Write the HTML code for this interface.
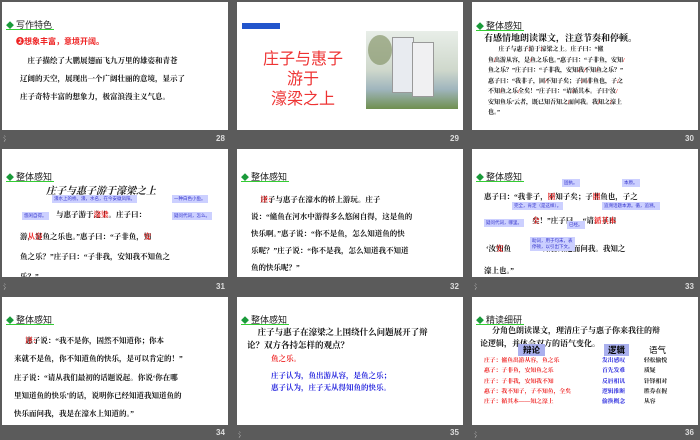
<!DOCTYPE html>
<html><head><meta charset="utf-8"><style>
*{margin:0;padding:0;box-sizing:border-box}
body{width:700px;height:437px;background:#5b5b5b;position:relative;overflow:hidden;font-family:"Liberation Serif","Noto Serif CJK SC",serif}
.s{position:absolute;width:226px;height:128px;background:#fff;overflow:hidden}
.s *{position:absolute;white-space:nowrap}
.h{left:4px;top:16px;font:9px "Liberation Sans","Noto Sans CJK SC",sans-serif;color:#222}
.h:before{content:"◆";color:#1a9a3a;font-size:8px;margin-right:2px}
.h:after{content:"";position:absolute;left:0;top:11px;width:48px;height:1px;background:#3c3}
.t{font-size:7.5px;line-height:16px;color:#111;font-weight:bold}
.r{color:#e22}.b{color:#22d}
.n{position:absolute;color:#ddd;font:bold 8px "Liberation Sans",sans-serif}
.i{position:absolute;color:#bbb;font:7px sans-serif}
.tag{background:#ccd0ff;color:#33c;font-size:4.5px;padding:1px 2px;font-family:"Noto Sans CJK SC",sans-serif}
</style></head><body>
<!-- 28 -->
<div class="s" style="left:2px;top:2px">
<div class="h">写作特色</div>
<div style="left:14px;top:34px;font:bold 8px 'Noto Sans CJK SC',sans-serif;color:#e22">❷想象丰富，意境开阔。</div>
<div class="t" style="left:18px;top:50px;line-height:18px">&nbsp;&nbsp;&nbsp;&nbsp;庄子描绘了大鹏展翅而飞九万里的雄姿和青苍<br>辽阔的天空，展现出一个广阔壮丽的意境，显示了<br>庄子奇特丰富的想象力，极富浪漫主义气息。</div>
</div>
<div class="i" style="left:3px;top:134px">氵</div><div class="n" style="left:216px;top:134px">28</div>
<!-- 29 -->
<div class="s" style="left:237px;top:2px">
<div style="left:5px;top:21px;width:38px;height:6px;background:#2255cc"></div>
<div style="left:16px;top:45px;width:100px;text-align:center;font:16px 'Noto Sans CJK SC',sans-serif;line-height:20px;color:#e33;white-space:normal">庄子与惠子<br>游于<br>濠梁之上</div>
<div style="left:129px;top:29px;width:92px;height:78px;background:linear-gradient(180deg,#e8eee8 0%,#cfd8cc 50%,#9fb5bd 75%,#6f8f4f 100%)"></div>
<div style="left:155px;top:35px;width:22px;height:56px;background:#e8ebf0;border:1px solid #999"></div>
<div style="left:175px;top:40px;width:22px;height:55px;background:#f0f0f2;border:1px solid #999"></div>
<div style="left:131px;top:33px;width:24px;height:30px;background:#7a8a5a;border-radius:50%;opacity:.6"></div>
</div>
<div class="n" style="left:450px;top:134px">29</div>
<!-- 30 -->
<div class="s" style="left:472px;top:2px">
<div class="h" style="top:17px">整体感知</div>
<div style="left:12px;top:29px;font:bold 9px 'Noto Serif CJK SC',serif;color:#111">有感情地朗读课文，注意节奏和停顿。</div>
<div class="t" style="left:16px;top:43px;font-size:6px;line-height:10.5px">&nbsp;&nbsp;&nbsp;&nbsp;&nbsp;&nbsp;&nbsp;庄子与惠子<span class="r">/</span>游于<span class="r">/</span>濠梁之上。庄子曰：“鯈<br>鱼<span class="r">/</span>出游从容，是<span class="r">/</span>鱼之乐也。”惠子曰：“子非鱼，安知<span class="r">/</span><br>鱼之乐？”庄子曰：“子非我，安知<span class="r">/</span>我<span class="r">/</span>不知<span class="r">/</span>鱼之乐？”<br>惠子曰：“我非子，固<span class="r">/</span>不知子矣；子<span class="r">/</span>固<span class="r">/</span>非鱼也，子<span class="r">/</span>之<br>不知<span class="r">/</span>鱼之乐<span class="r">/</span>全矣！”庄子曰：“请<span class="r">/</span>循其本。子曰‘汝<span class="r">/</span><br>安知鱼乐’云者，既已知吾知之<span class="r">/</span>而问我。我<span class="r">/</span>知之<span class="r">/</span>濠上<br>也。”</div>
</div>
<div class="n" style="left:685px;top:134px">30</div>
<!-- 31 -->
<div class="s" style="left:2px;top:149px">
<div class="h" style="top:21px">整体感知</div>
<div style="left:44px;top:33px;font:italic bold 10px 'Noto Serif CJK SC',serif;color:#222">庄子与惠子游于濠梁之上</div>
<div class="tag" style="left:50px;top:46px">濠水上的桥。濠，水名，在今安徽凤阳。</div>
<div class="tag" style="left:170px;top:46px">一种白色小鱼。</div>
<div class="tag" style="left:20px;top:63px">悠闲自得。</div>
<div class="tag" style="left:170px;top:63px">疑问代词，怎么。</div>
<div class="t" style="left:54px;top:58px">与惠子游于<span class="r">濠梁</span>之上。庄子曰：</div>
<div class="t" style="left:18px;top:78px;line-height:20px">游<span class="r">从容</span>，是鱼之乐也。”惠子曰：“子非鱼，<span class="r">安</span>知<br>鱼之乐？”庄子曰：“子非我，安知我不知鱼之<br>乐？”</div>
</div>
<div class="i" style="left:3px;top:282px">氵</div><div class="n" style="left:216px;top:282px">31</div>
<!-- 32 -->
<div class="s" style="left:237px;top:149px">
<div class="h" style="top:21px">整体感知</div>
<div class="t" style="left:14px;top:42px;line-height:17px">&nbsp;&nbsp;&nbsp;&nbsp;&nbsp;<span class="r">译：</span>庄子与惠子在濠水的桥上游玩。庄子<br>说：“鯈鱼在河水中游得多么悠闲自得，这是鱼的<br>快乐啊。”惠子说：“你不是鱼，怎么知道鱼的快<br>乐呢？”庄子说：“你不是我，怎么知道我不知道<br>鱼的快乐呢？”</div>
</div>
<div class="n" style="left:450px;top:282px">32</div>
<!-- 33 -->
<div class="s" style="left:472px;top:149px">
<div class="h" style="top:21px">整体感知</div>
<div class="tag" style="left:90px;top:30px">固执。</div><div class="tag" style="left:150px;top:30px">本原。</div>
<div class="t" style="left:12px;top:40px">惠子曰：“我非子，<span class="r">固</span>不知子矣；子<span class="r">固</span>非鱼也，子之</div>
<div class="tag" style="left:40px;top:53px">完全，肯定（是这样）。</div><div class="tag" style="left:130px;top:53px">追溯话题本源。循，追溯。</div>
<div class="tag" style="left:12px;top:70px">疑问代词，哪里。</div>
<div class="t" style="left:60px;top:64px"><span class="r">全</span>矣！”庄子曰&nbsp;&nbsp;&nbsp;&nbsp;&nbsp;“请<span class="r">循其本</span>。子曰</div>
<div class="tag" style="left:95px;top:72px">已经。</div>
<div class="t" style="left:14px;top:92px">‘汝<span class="r">安</span>知鱼&nbsp;&nbsp;&nbsp;&nbsp;&nbsp;&nbsp;&nbsp;&nbsp;&nbsp;&nbsp;&nbsp;&nbsp;&nbsp;&nbsp;&nbsp;&nbsp;&nbsp;知吾知之而问我。我知之</div>
<div class="tag" style="left:58px;top:88px;line-height:6px">助词，用于句末，表<br>停顿，以引出下文。</div>
<div class="t" style="left:12px;top:114px">濠上也。”</div>
</div>
<div class="i" style="left:474px;top:282px">氵</div><div class="n" style="left:685px;top:282px">33</div>
<!-- 34 -->
<div class="s" style="left:2px;top:297px">
<div class="h" style="top:16px">整体感知</div>
<div class="t" style="left:12px;top:35px;line-height:18.3px">&nbsp;&nbsp;&nbsp;&nbsp;&nbsp;&nbsp;<span class="r">译：</span>惠子说：“我不是你，固然不知道你；你本<br>来就不是鱼，你不知道鱼的快乐，是可以肯定的！”<br>庄子说：“请从我们最初的话题说起。你说‘你在哪<br>里知道鱼的快乐’的话，说明你已经知道我知道鱼的<br>快乐而问我，我是在濠水上知道的。”</div>
</div>
<div class="n" style="left:216px;top:428px">34</div>
<!-- 35 -->
<div class="s" style="left:237px;top:297px">
<div class="h" style="top:16px">整体感知</div>
<div style="left:10px;top:29px;font:bold 8.5px 'Noto Serif CJK SC',serif;line-height:13px;color:#111">&nbsp;&nbsp;&nbsp;&nbsp;&nbsp;庄子与惠子在濠梁之上围绕什么问题展开了辩<br>论？双方各持怎样的观点？</div>
<div class="t r" style="left:34px;top:54px">鱼之乐。</div>
<div class="t b" style="left:34px;top:73px;line-height:12px">庄子认为，鱼出游从容，是鱼之乐；<br>惠子认为，庄子无从得知鱼的快乐。</div>
</div>
<div class="i" style="left:238px;top:430px">氵</div><div class="n" style="left:450px;top:428px">35</div>
<!-- 36 -->
<div class="s" style="left:472px;top:297px">
<div class="h" style="top:16px">精读细研</div>
<div style="left:8px;top:27px;font:bold 8px 'Noto Serif CJK SC',serif;line-height:13px;color:#111">&nbsp;&nbsp;&nbsp;&nbsp;&nbsp;&nbsp;分角色朗读课文，理清庄子与惠子你来我往的辩<br>论逻辑，并体会双方的语气变化。</div>
<div style="left:46px;top:47px;background:#aab0ee;font:bold 8.5px 'Noto Sans CJK SC',sans-serif;padding:0 5px;line-height:12px">辩论</div>
<div style="left:132px;top:47px;background:#aab0ee;font:bold 8.5px 'Noto Sans CJK SC',sans-serif;padding:0 4px;line-height:12px">逻辑</div>
<div style="left:177px;top:47px;font:8.5px 'Noto Sans CJK SC',sans-serif;line-height:12px">语气</div>
<div class="t r" style="left:12px;top:59px;font-size:5.8px;line-height:10.3px">庄子：鯈鱼出游从容，鱼之乐<br>惠子：子非鱼，安知鱼之乐<br>庄子：子非我，安知我不知<br>惠子：我不知子，子不知鱼，全矣<br>庄子：循其本——知之濠上</div>
<div class="t b" style="left:130px;top:59px;font-size:5.8px;line-height:10.3px">发出感叹<br>首先发难<br>反唇相讥<br>逻辑推断<br>偷换概念</div>
<div class="t" style="left:172px;top:59px;font-size:5.8px;line-height:10.3px">轻松愉悦<br>质疑<br>针锋相对<br>胜券在握<br>从容</div>
</div>
<div class="i" style="left:474px;top:430px">氵</div><div class="n" style="left:685px;top:428px">36</div>
</body></html>
